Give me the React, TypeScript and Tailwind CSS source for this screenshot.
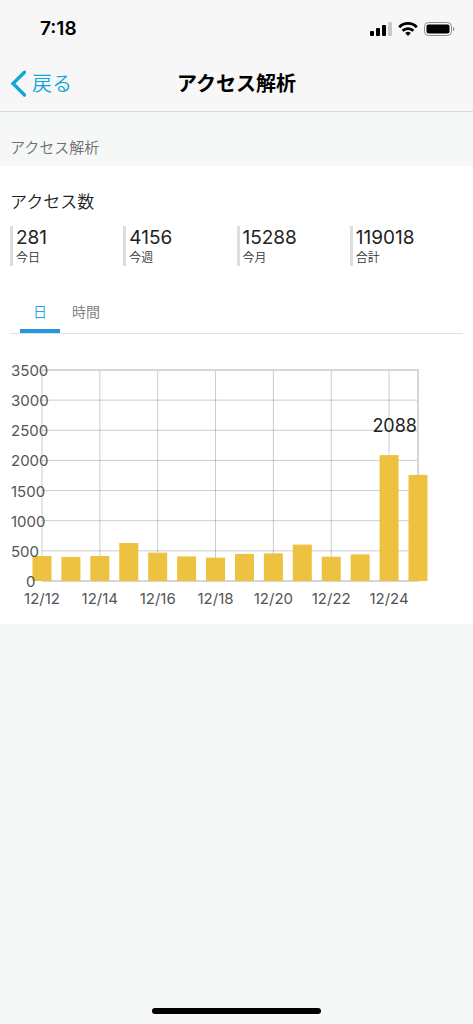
const stats = [
  { value: '281', label: '今日' },
  { value: '4156', label: '今週' },
  { value: '15288', label: '今月' },
  { value: '119018', label: '合計' },
]

const days = [
  { date: '12/12', count: 415 },
  { date: '12/13', count: 400 },
  { date: '12/14', count: 415 },
  { date: '12/15', count: 630 },
  { date: '12/16', count: 470 },
  { date: '12/17', count: 408 },
  { date: '12/18', count: 388 },
  { date: '12/19', count: 450 },
  { date: '12/20', count: 458 },
  { date: '12/21', count: 604 },
  { date: '12/22', count: 403 },
  { date: '12/23', count: 442 },
  { date: '12/24', count: 2088 },
  { date: '12/25', count: 1760 },
]

const MAX = 3500
const LEFT = 32
const RIGHT = 408
const TOP = 10
const BOTTOM = 221
const BAR = 19

const ticks = [0, 500, 1000, 1500, 2000, 2500, 3000, 3500]

const xOf = (i: number) => LEFT + (i * (RIGHT - LEFT)) / (days.length - 1)
const yOf = (v: number) => BOTTOM - (v / MAX) * (BOTTOM - TOP)

function StatusBar() {
  return (
    <div className="flex h-14 items-center justify-between pl-10 pr-[18px] pt-0.5">
      <span className="text-[19px] font-semibold">7:18</span>
      <div className="flex items-center gap-1.5">
        <svg width="22" height="14" viewBox="0 0 22 14" aria-hidden="true">
          <rect x="0" y="9" width="4" height="5" rx="1" />
          <rect x="6" y="6" width="4" height="8" rx="1" />
          <rect x="12" y="3" width="4" height="11" rx="1" />
          <rect x="18" y="0" width="4" height="14" rx="1" fill="#c8c8c8" />
        </svg>
        <svg width="20" height="14" viewBox="0 0 20 14" aria-hidden="true">
          <g fill="none" stroke="black" strokeWidth="2.7">
            <path d="M1.2 5.2 A12.2 12.2 0 0 1 18.8 5.2" />
            <path d="M4.6 8.8 A7.6 7.6 0 0 1 15.4 8.8" />
          </g>
          <path d="M10 13.9 L7.2 11.1 A4 4 0 0 1 12.8 11.1 Z" />
        </svg>
        <svg width="31" height="14" viewBox="0 0 31 14" aria-hidden="true">
          <rect x="0.5" y="0.5" width="27" height="13" rx="4" fill="none" stroke="#8e8e8e" />
          <rect x="2.5" y="2.5" width="23" height="9" rx="2" />
          <path d="M29 4.8 C30.8 5.5 30.8 8.5 29 9.2 Z" fill="#8e8e8e" />
        </svg>
      </div>
    </div>
  )
}

function NavBar() {
  return (
    <div className="grid h-14 grid-cols-[1fr_auto_1fr] items-center border-b border-[#d8dadb] px-2.5">
      <a href="#back" className="flex items-center gap-1.5 text-xl font-[350] text-[#12a5d6]">
        <svg width="16" height="28" viewBox="0 0 16 28" fill="none" aria-hidden="true">
          <path d="M14.5 2.2 L3 13.5 L14.5 25" stroke="currentColor" strokeWidth="3.4" strokeLinecap="round" />
        </svg>
        戻る
      </a>
      <h1 className="text-xl font-bold">アクセス解析</h1>
    </div>
  )
}

function Chart() {
  return (
    <svg viewBox="0 0 453 264" className="w-full" role="img" aria-label="アクセス数">
      {/* grid */}
      <g stroke="black" strokeOpacity="0.2">
        {ticks.map((v) => (
          <line key={v} x1={LEFT} x2={RIGHT} y1={yOf(v)} y2={yOf(v)} />
        ))}
        {days.map((d, i) =>
          i % 2 === 0 ? <line key={d.date} x1={xOf(i)} x2={xOf(i)} y1={TOP} y2={BOTTOM} /> : null
        )}
      </g>
      <path d={`M${LEFT} ${TOP} H${RIGHT} V${BOTTOM} H${LEFT}`} fill="none" stroke="#d6d6d6" strokeWidth="2" />

      {/* bars */}
      {days.map((d, i) => (
        <rect
          key={d.date}
          x={xOf(i) - BAR / 2}
          y={yOf(d.count)}
          width={BAR}
          height={BOTTOM - yOf(d.count)}
          fill="#edc240"
        />
      ))}

      {/* axis labels */}
      <g fill="#545454" fontSize="15">
        {ticks.map((v) => (
          <text key={v} x={v === 0 ? 16 : 1} y={yOf(v) + 6}>
            {v}
          </text>
        ))}
        {days.map((d, i) =>
          i % 2 === 0 ? (
            <text key={d.date} x={xOf(i)} y={BOTTOM + 23} textAnchor="middle">
              {d.date}
            </text>
          ) : null
        )}
      </g>
      <text x="407" y="72" textAnchor="end" fontSize="18" fill="#222">
        2088
      </text>
    </svg>
  )
}

export default function App() {
  return (
    <div className="flex min-h-screen flex-col bg-[#f6f8f8] font-['Inter','Noto_Sans_CJK_JP',sans-serif] text-black">
      <header className="bg-[#f7f7f7]">
        <StatusBar />
        <NavBar />
      </header>

      <main>
        <h2 className="px-2.5 pb-1.5 pt-6 text-[15px] font-[350] leading-6 text-[#6d6f70]">アクセス解析</h2>

        <section className="bg-white px-2.5 pt-6">
          <h3 className="text-[17px] font-[350] leading-6 text-[#222]">アクセス数</h3>
          <dl className="mt-3 grid grid-cols-4">
            {stats.map((s) => (
              <div key={s.label} className="flex h-10 flex-col border-l-3 border-[#dedede] pl-[3px]">
                <dd className="text-[19px] leading-6 text-[#222]">{s.value}</dd>
                <dt className="order-last text-xs font-[350] text-[#333]">{s.label}</dt>
              </div>
            ))}
          </dl>

          <div role="tablist" className="mt-6 flex h-11 border-b border-[#d9e2e8] px-2.5 text-sm font-[350]">
            <button role="tab" aria-selected="true" className="w-10 border-b-4 border-[#2b94e0] pt-1 text-[#2ea0ea]">
              日
            </button>
            <button role="tab" aria-selected="false" className="px-3 text-[#777]">
              時間
            </button>
          </div>

          <div className="pt-[26px]">
            <Chart />
          </div>
        </section>
      </main>

      <div className="mt-auto flex justify-center pb-2.5">
        <div className="h-1.5 w-[169px] rounded-full bg-black" />
      </div>
    </div>
  )
}
